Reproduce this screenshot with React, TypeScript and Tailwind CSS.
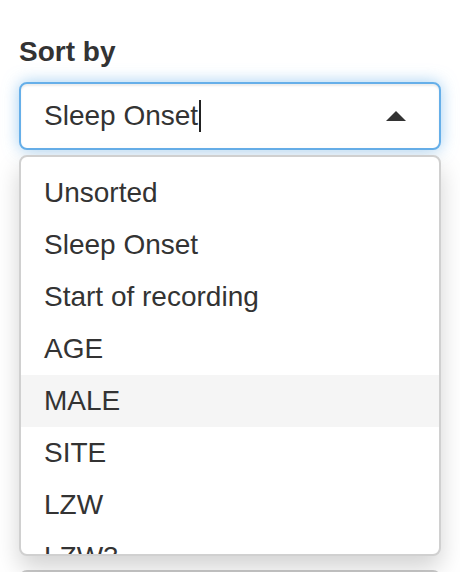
const OPTIONS = ["Unsorted", "Sleep Onset", "Start of recording", "AGE", "MALE", "SITE", "LZW", "LZW3"];
const ACTIVE = "MALE";

export default function App() {
  return (
    <div
      className="h-[572px] overflow-hidden bg-white px-[19px] pt-[32px] text-[28px] leading-[40px] text-[#333333]"
      style={{ fontFamily: '"Liberation Sans", Arial, sans-serif' }}
    >
      <label className="mb-[10px] block font-bold">Sort by</label>

      <div className="relative">
        {/* selectize input, focused */}
        <div className="flex h-[68px] items-center rounded-[8px] border-2 border-[#66afe9] bg-white px-[23px] shadow-[inset_0_2px_2px_rgba(0,0,0,0.075),0_0_16px_rgba(102,175,233,0.6)]">
          <span>Sleep Onset</span>
          <span className="ml-[1px] inline-block h-[32px] w-[2px] bg-[#222]" />
          <span className="ml-auto mr-[10px] h-0 w-0 border-x-[10px] border-b-[10px] border-x-transparent border-b-[#333]" />
        </div>

        {/* dropdown */}
        <div className="absolute left-0 right-0 top-[73px] z-10 h-[401px] overflow-hidden rounded-[8px] border-2 border-[#d0d0d0] bg-white shadow-[0_12px_24px_rgba(0,0,0,0.175)]">
          <div className="py-[10px]">
            {OPTIONS.map((o) => (
              <div key={o} className={`px-[23px] py-[6px] ${o === ACTIVE ? "bg-[#f5f5f5]" : ""}`}>
                {o}
              </div>
            ))}
          </div>
        </div>

        {/* next control below, mostly hidden by dropdown */}
        <div className="mt-[420px] h-[40px] rounded-t-[8px] border-x-2 border-t-2 border-[#cccccc] bg-white" />
      </div>
    </div>
  );
}
